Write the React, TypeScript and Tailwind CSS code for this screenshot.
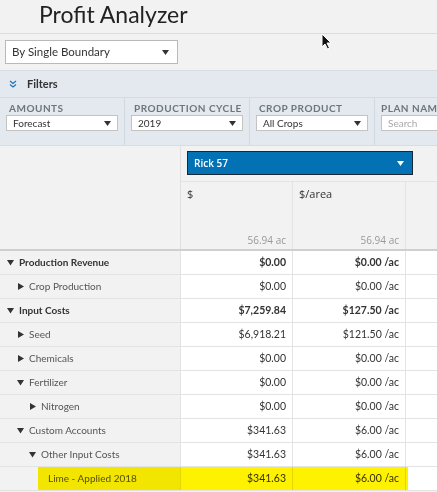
const filters = [
  { label: 'Amounts', value: 'Forecast' },
  { label: 'Production Cycle', value: '2019' },
  { label: 'Crop Product', value: 'All Crops' },
] as const

type Row = {
  name: string
  level: number
  toggle?: 'open' | 'closed'
  bold?: boolean
  total: string
  perArea: string
  highlight?: boolean
}

const rows: Row[] = [
  { name: 'Production Revenue', level: 0, toggle: 'open', bold: true, total: '$0.00', perArea: '$0.00 /ac' },
  { name: 'Crop Production', level: 1, toggle: 'closed', total: '$0.00', perArea: '$0.00 /ac' },
  { name: 'Input Costs', level: 0, toggle: 'open', bold: true, total: '$7,259.84', perArea: '$127.50 /ac' },
  { name: 'Seed', level: 1, toggle: 'closed', total: '$6,918.21', perArea: '$121.50 /ac' },
  { name: 'Chemicals', level: 1, toggle: 'closed', total: '$0.00', perArea: '$0.00 /ac' },
  { name: 'Fertilizer', level: 1, toggle: 'open', total: '$0.00', perArea: '$0.00 /ac' },
  { name: 'Nitrogen', level: 2, toggle: 'closed', total: '$0.00', perArea: '$0.00 /ac' },
  { name: 'Custom Accounts', level: 1, toggle: 'open', total: '$341.63', perArea: '$6.00 /ac' },
  { name: 'Other Input Costs', level: 2, toggle: 'open', total: '$341.63', perArea: '$6.00 /ac' },
  { name: 'Lime - Applied 2018', level: 3, total: '$341.63', perArea: '$6.00 /ac', highlight: true },
]

const indent = ['pl-[7px]', 'pl-[17px]', 'pl-[29px]', 'pl-[48px]']

function Caret({ className = '' }: { className?: string }) {
  return (
    <svg width="7" height="5" viewBox="0 0 7 5" className={className}>
      <path d="M0 0h7L3.5 5z" fill="currentColor" />
    </svg>
  )
}

function Toggle({ state }: { state: 'open' | 'closed' }) {
  return (
    <svg width="7" height="7" viewBox="0 0 7 7" className="mr-[5px] shrink-0 text-[#333]">
      {state === 'open' ? <path d="M0 1h7L3.5 6.5z" fill="currentColor" /> : <path d="M1 0v7l6-3.5z" fill="currentColor" />}
    </svg>
  )
}

export default function App() {
  return (
    <div className="relative h-[492px] w-[437px] overflow-hidden bg-[#f2f2f2] font-['Lato',sans-serif] text-[#333]">
      <header className="h-[34px] border-b border-[#d6dee4] pl-[39px]">
        <h1 className="text-[23px] leading-[29px] text-[#222]">Profit Analyzer</h1>
      </header>

      <div className="h-[36px] px-[5px] pt-[6px]">
        <div className="flex h-[24px] w-[173px] items-center justify-between border border-[#b9b9b9] bg-white pr-[8px] pl-[6px] text-[11.5px] text-[#333]">
          <span>By Single Boundary</span>
          <Caret />
        </div>
      </div>

      <section className="border-y border-[#d6dee4] bg-[#e3e9ef]">
        <div className="flex h-[27px] items-center gap-[10px] border-b border-[#d3dce3] pl-[9px]">
          <svg width="8" height="8" viewBox="0 0 8 8" className="text-[#1f72b6]">
            <path d="M1 1l3 2.5L7 1M1 4.5L4 7l3-2.5" fill="none" stroke="currentColor" strokeWidth="1.2" />
          </svg>
          <span className="text-[11px] font-bold text-[#333]">Filters</span>
        </div>
        <div className="flex h-[47px]">
          {filters.map((f) => (
            <div key={f.label} className="w-[125px] border-r border-[#d0d9e0] px-[6px] pt-[4px] pb-[4px]">
              <div className="pl-[3px] text-[10px] leading-[12px] font-bold tracking-[0.5px] whitespace-nowrap text-[#6e767d] uppercase">{f.label}</div>
              <div className="mt-[1px] flex h-[16px] w-[112px] items-center justify-between border border-[#c3c3c3] bg-white pr-[6px] pl-[6px] text-[10px] text-[#333]">
                <span>{f.value}</span>
                <Caret />
              </div>
            </div>
          ))}
          <div className="flex-1 px-[6px] pt-[4px]">
            <div className="text-[10px] leading-[12px] font-bold tracking-[0.5px] whitespace-nowrap text-[#6e767d] uppercase">Plan Nam</div>
            <div className="mt-[1px] flex h-[16px] items-center border border-[#c3c3c3] bg-white pl-[6px] text-[10px] text-[#a9a9a9]">Search</div>
          </div>
        </div>
      </section>

      <div className="grid h-[105px] grid-cols-[181px_1fr] border-b-2 border-[#cfcfcf] font-['Open_Sans',sans-serif]">
        <div className="border-r border-[#e0e0e0]" />
        <div className="flex flex-col">
          <div className="h-[36px] border-b border-[#e3e3e3] pt-[5px] pl-[6px]">
            <div className="flex h-[24px] w-[226px] items-center justify-between border border-[#1b2733] bg-[#0272b4] pr-[8px] pl-[6px] text-[10px] font-semibold text-white">
              <span>Rick 57</span>
              <Caret />
            </div>
          </div>
          <div className="grid flex-1 grid-cols-[112px_113px_1fr] text-[10px]">
            {['$', '$/area'].map((h) => (
              <div key={h} className="flex flex-col justify-between border-r border-[#e3e3e3] pt-[4px] pr-[6px] pb-[1px] pl-[6px]">
                <span className="text-[11px] text-[#333]">{h}</span>
                <span className="text-right text-[#999]">56.94 ac</span>
              </div>
            ))}
            <div />
          </div>
        </div>
      </div>

      <div className="grid grid-cols-[181px_112px_113px_1fr]">
        {rows.map((r) => (
          <div key={r.name} className="relative col-span-4 grid h-[24px] grid-cols-subgrid">
            <div
              className={`flex items-center border-r border-b border-[#e3e3e3] bg-[#f2f2f2] text-[10px] ${indent[r.level]} ${r.bold ? 'font-bold text-[#333]' : 'text-[#555]'}`}
            >
              {r.toggle && <Toggle state={r.toggle} />}
              <span>{r.name}</span>
            </div>
            <div className={`flex items-center justify-end border-r border-b border-[#e3e3e3] bg-white pr-[6px] text-[10.5px] text-[#333] ${r.bold ? 'font-bold' : ''}`}>
              {r.total}
            </div>
            <div className={`flex items-center justify-end border-r border-b border-[#e3e3e3] bg-white pr-[6px] text-[10.5px] text-[#333] ${r.bold ? 'font-bold' : ''}`}>
              {r.perArea}
            </div>
            <div className="border-b border-[#e3e3e3] bg-white" />
            {r.highlight && (
              <div className="pointer-events-none absolute top-0 bottom-[1px] left-[38px] w-[370px] bg-[#fff200] mix-blend-multiply" />
            )}
          </div>
        ))}
      </div>

      <svg width="12" height="17" viewBox="0 0 12 17" className="absolute top-[33px] left-[321px]">
        <path d="M1 1v13l3-3 2.5 5 2-1-2.5-5H10z" fill="#111" stroke="#fff" strokeWidth="1" />
      </svg>
    </div>
  )
}
